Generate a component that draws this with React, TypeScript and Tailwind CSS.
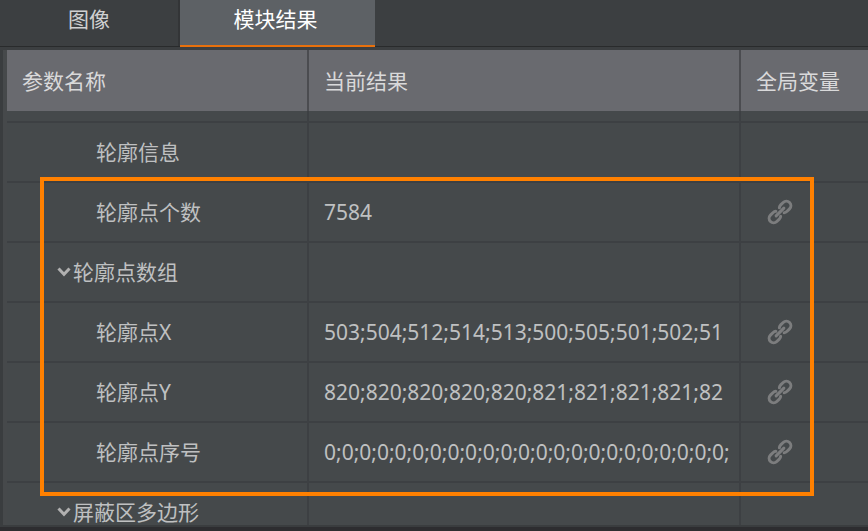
import React from "react";

type Row = {
  name: string;
  value?: string;
  group?: boolean;
  linked?: boolean;
};

const rows: Row[] = [
  { name: "轮廓信息" },
  { name: "轮廓点个数", value: "7584", linked: true },
  { name: "轮廓点数组", group: true },
  { name: "轮廓点X", value: "503;504;512;514;513;500;505;501;502;51", linked: true },
  { name: "轮廓点Y", value: "820;820;820;820;820;821;821;821;821;82", linked: true },
  { name: "轮廓点序号", value: "0;0;0;0;0;0;0;0;0;0;0;0;0;0;0;0;0;0;0;0;0;0;0;", linked: true },
  { name: "屏蔽区多边形", group: true },
];

function LinkIcon() {
  return (
    <svg viewBox="-13 -13 26 26" className="block size-[26px]" fill="none" stroke="#7c7d7e" strokeWidth="3" strokeLinecap="round" aria-hidden="true">
      <g transform="rotate(-45)">
        <path d="M-2.500 -3.400 Q-3.600 -4.500 -5.500 -4.500 H-9 A4.500 4.500 0 0 0 -9 4.500 H-5.500 Q-3.600 4.500 -2.500 3.400" />
        <path d="M2.500 -3.400 Q3.600 -4.500 5.500 -4.500 H9 A4.500 4.500 0 0 1 9 4.500 H5.500 Q3.600 4.500 2.500 3.400" />
        <path d="M-5.500 0 H5.500" />
      </g>
    </svg>
  );
}

function Chevron() {
  return (
    <svg viewBox="0 0 14 10" className="block h-[10px] w-[14px]" fill="none" stroke="#b0b0b0" strokeWidth="3" aria-hidden="true">
      <path d="M1.500 1.500 L7 7.300 L12.500 1.500" />
    </svg>
  );
}

const line = "border-[#3d4043]";

export default function App() {
  return (
    <main className="flex h-screen flex-col overflow-hidden bg-[#3c3f41] font-['Noto_Sans','Noto_Sans_CJK_SC',sans-serif] text-[21px] leading-7 text-[#bfc0c1]">
      <div role="tablist" className="flex h-[47px] shrink-0 border-b border-[#292b2c]">
        <button role="tab" aria-selected="false" className="h-[46px] w-[180px] border-r-2 border-[#333537] pb-2 text-[#d0d1d2]">
          图像
        </button>
        <button role="tab" aria-selected="true" className="h-[47px] w-[195px] border-b-2 border-[#e8700c] bg-[#5d6165] pr-1 pb-2 text-white">
          模块结果
        </button>
      </div>
      <div className="relative mt-[3px] min-h-0 flex-1 overflow-hidden border-l-[3px] border-[#3a3d3f] bg-[#46494b] pl-1">
        <table className="w-full table-fixed border-separate border-spacing-0 bg-[#45494b]">
          <colgroup>
            <col className="w-[302px]" />
            <col />
            <col className="w-[127px]" />
          </colgroup>
          <thead>
            <tr className="h-[61px] bg-[#696a6f] text-left text-[#d9d9da]">
              <th className="border-r-2 border-[#4b4c50] pl-[15px] font-normal">参数名称</th>
              <th className="border-r-2 border-[#4b4c50] pl-[15px] font-normal">当前结果</th>
              <th className="pl-[15px] font-normal">全局变量</th>
            </tr>
          </thead>
          <tbody>
            <tr className="h-3">
              <td className={`border-r-2 border-b-2 p-0 ${line}`} />
              <td className={`border-r-2 border-b-2 p-0 ${line}`} />
              <td className={`border-b-2 p-0 ${line}`} />
            </tr>
            {rows.map((row) => (
              <tr key={row.name} className="h-[60px]">
                <td className={`border-r-2 border-b-2 p-0 ${line}`}>
                  {row.group ? (
                    <div className="flex items-center gap-[2px] pl-[50px]">
                      <button aria-label={`折叠${row.name}`} aria-expanded="true">
                        <Chevron />
                      </button>
                      <span>{row.name}</span>
                    </div>
                  ) : (
                    <div className="pl-[89px]">{row.name}</div>
                  )}
                </td>
                <td className={`border-r-2 border-b-2 py-0 pr-2 pl-[15px] ${line}`}>
                  <div className="overflow-hidden whitespace-nowrap">{row.value}</div>
                </td>
                <td className={`border-b-2 py-0 pr-0 pl-[26px] ${line}`}>
                  {row.linked && (
                    <button aria-label={`绑定${row.name}`} className="block">
                      <LinkIcon />
                    </button>
                  )}
                </td>
              </tr>
            ))}
          </tbody>
        </table>
        <div className="pointer-events-none absolute top-[127px] right-[54px] left-[37px] h-[319px] border-4 border-[#ff8000]" />
      </div>
      <div className="h-[6px] shrink-0 border-t-2 border-[#3a3d3f] bg-[#2d2d30]" />
    </main>
  );
}
